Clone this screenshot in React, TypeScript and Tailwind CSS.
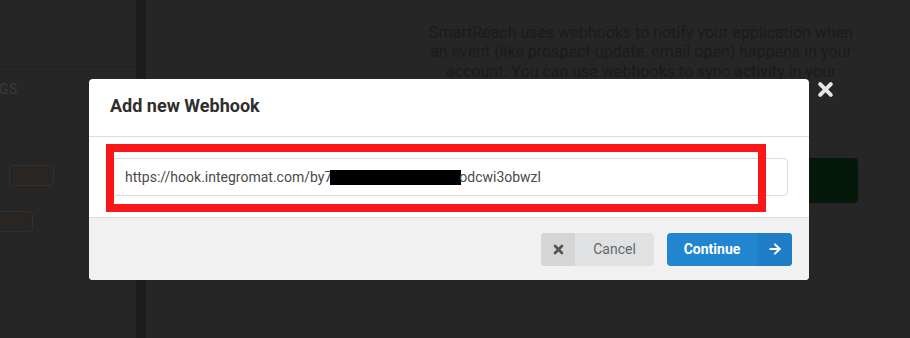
import React from "react";
import { ArrowRight } from "lucide-react";

const font = { fontFamily: "Roboto, 'Liberation Sans', sans-serif" };

function CloseX({ className, width = 3.6 }: { className?: string; width?: number }) {
  return (
    <svg viewBox="0 0 16 16" className={className}>
      <path
        d="M3 3 L13 13 M13 3 L3 13"
        stroke="currentColor"
        strokeWidth={width}
        strokeLinecap="round"
      />
    </svg>
  );
}

function Badge() {
  return (
    <span className="inline-flex h-[21px] w-[45px] items-center justify-center rounded-[4px] border border-[#3d2e22] text-[12px] font-bold text-[#33241b]">
      Beta
    </span>
  );
}

export default function App() {
  return (
    <div
      className="relative flex h-[338px] w-[910px] overflow-hidden bg-[#262626]"
      style={font}
    >
      {/* sidebar behind the dimmer */}
      <div className="flex w-[136px] flex-col">
        <div className="h-[67px] border-b border-[#202020]" />
        <div className="mt-[12px] -ml-[50px] text-[14px] tracking-wide text-[#3a3a3a]">
          SETTINGS
        </div>
        <div className="mt-[62px] pl-[9px]">
          <Badge />
        </div>
        <div className="mt-[22px] -ml-[12px]">
          <Badge />
        </div>
      </div>
      <div className="w-[10px] bg-[#1c1c1c]" />

      {/* page content */}
      <div className="flex-1 pl-[278px] pt-[23px]">
        <div className="w-[434px]">
          <p className="text-center text-[16px] leading-[19.3px] text-[#1b1b1b]">
            SmartReach uses webhooks to notify your application when an event
            (like prospect-update, email open) happens in your account. You can
            use webhooks to sync activity in your SmartReach account with apps that you
          </p>
          <div className="mt-[58px] h-[45px] rounded-[4px] bg-[#05190b]" />
        </div>
      </div>

      {/* modal */}
      <div className="absolute left-[89px] top-[79px] flex h-[201px] w-[720px] flex-col overflow-hidden rounded-[4px] bg-white">
        <div className="flex h-[58px] items-center border-b border-[#dedede] pb-[4px] pl-[21px]">
          <h2 className="text-[18px] font-bold text-[#2e2e2e]">Add new Webhook</h2>
        </div>
        <div className="flex h-[81px] items-center border-b border-[#dcdcdc] pl-[23px] pr-[21px]">
          <div className="flex h-[38px] w-full items-center rounded-[4px] border border-[#dadada] pl-[12px] text-[14px] text-[#4a4a4a]">
            <span>https://hook.integromat.com/by7</span>
            <span className="-ml-[2px] inline-block h-[15px] w-[131px] bg-black" />
            <span className="-ml-[2px]">odcwi3obwzl</span>
          </div>
        </div>
        <div className="flex flex-1 items-center justify-end gap-[13px] bg-[#f1f1f1] pr-[17px]">
          <button className="flex h-[33px] w-[113px] overflow-hidden rounded-[4px] bg-[#e0e1e2] text-[14px] text-[#666666]">
            <span className="flex h-full w-[34px] items-center justify-center bg-[#d4d5d6]">
              <CloseX className="h-[11px] w-[11px] text-[#555555]" width={4} />
            </span>
            <span className="flex flex-1 items-center justify-center">Cancel</span>
          </button>
          <button className="flex h-[33px] w-[125px] overflow-hidden rounded-[4px] bg-[#2185d0] text-[14px] font-bold text-white">
            <span className="flex flex-1 items-center justify-center">Continue</span>
            <span className="flex h-full w-[35px] items-center justify-center bg-[#1f7ec6]">
              <ArrowRight className="h-[16px] w-[16px]" strokeWidth={3} />
            </span>
          </button>
        </div>
      </div>

      {/* close icon of the dimmer */}
      <CloseX className="absolute left-[817px] top-[81px] h-[17px] w-[17px] text-[#e6e6e6]" width={3.8} />

      {/* red annotation box */}
      <div className="absolute left-[106px] top-[144px] h-[68px] w-[660px] border-[8px] border-[#fb1717]" />
    </div>
  );
}
